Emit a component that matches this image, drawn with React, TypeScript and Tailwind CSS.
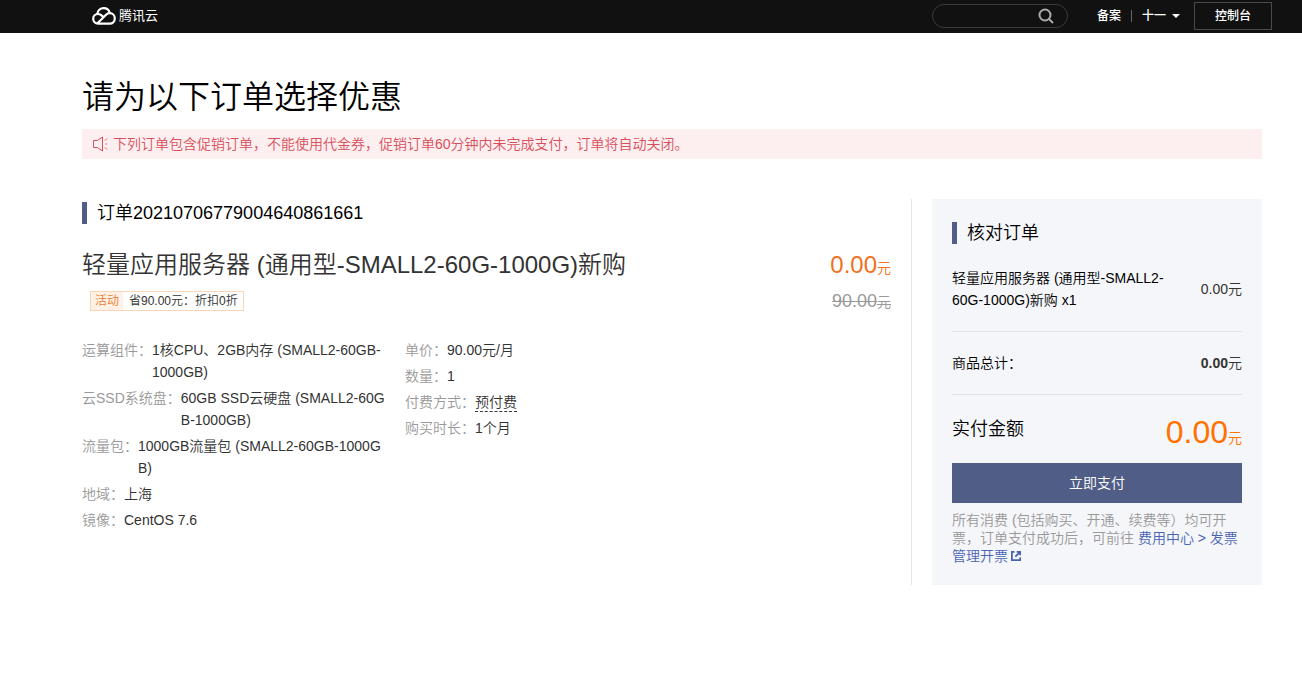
import React from 'react';

type Field = { label: string; value: string; hint?: boolean };

const specs: Field[] = [
  { label: '运算组件：', value: '1核CPU、2GB内存 (SMALL2-60GB-1000GB)' },
  { label: '云SSD系统盘：', value: '60GB SSD云硬盘 (SMALL2-60GB-1000GB)' },
  { label: '流量包：', value: '1000GB流量包 (SMALL2-60GB-1000GB)' },
  { label: '地域：', value: '上海' },
  { label: '镜像：', value: 'CentOS 7.6' },
];

const billing: Field[] = [
  { label: '单价：', value: '90.00元/月' },
  { label: '数量：', value: '1' },
  { label: '付费方式：', value: '预付费', hint: true },
  { label: '购买时长：', value: '1个月' },
];

function CloudLogo() {
  return (
    <svg className="h-[18px] w-6" viewBox="0 0 24 18" fill="none" stroke="#fff" strokeWidth="2.2" strokeLinecap="round" strokeLinejoin="round" aria-hidden="true">
      <path d="M5.3 7C5.700 3.600 8.300 1.200 11.600 1.200c3 0 5.500 1.900 6.200 4.800" />
      <path d="M10.400 9.100C9.100 7.800 7.700 7 6 7c-2.700 0-4.800 2.100-4.800 4.800 0 2.800 2.100 4.900 4.900 4.900h11.600c2.900 0 5.100-2.300 5.100-5.200s-2.200-5.300-5.100-5.300c-1.500 0-2.700.6-3.900 1.800l-8.300 8.300" />
    </svg>
  );
}

function SpeakerIcon() {
  return (
    <svg className="h-4 w-4 shrink-0" viewBox="0 0 16 16" fill="none" stroke="#d9505c" aria-hidden="true">
      <path d="M.5 4.500h4l5-3.500v14l-5-3.500h-4z" />
      <path d="M12 4.500l2-2M12.500 8h1.500M12 11.500l2 2" />
    </svg>
  );
}

function ExternalIcon() {
  return (
    <svg className="ml-[3px] inline-block h-[10px] w-[10px] align-baseline" viewBox="0 0 10 10" fill="none" stroke="#4a64b4" strokeWidth="1.8" aria-hidden="true">
      <path d="M3.500.9H.9v8.200h8.200V6.500M5.700.9h3.400v3.400M8.900 1.100 4.300 5.700" />
    </svg>
  );
}

function SectionTitle({ children }: { children: React.ReactNode }) {
  return (
    <h2 className="flex h-[22px] items-center border-l-[5px] border-[#505d87] pl-[10px] text-lg leading-[22px] text-black">
      {children}
    </h2>
  );
}

function FieldList({ fields }: { fields: Field[] }) {
  return (
    <dl className="flex flex-col gap-1">
      {fields.map((f) => (
        <div key={f.label} className="flex">
          <dt className="shrink-0 text-[#999]">{f.label}</dt>
          <dd className="break-all text-[#333]">
            {f.hint ? <span className="border-b border-dashed border-[#333] pb-px">{f.value}</span> : f.value}
          </dd>
        </div>
      ))}
    </dl>
  );
}

export default function App() {
  return (
    <div className="min-h-screen bg-white font-['Liberation_Sans','Noto_Sans_CJK_SC',sans-serif] text-sm leading-[22px] font-[350] text-[#333]">
      <header className="flex h-[33px] items-center bg-[#111] pr-[30px] pb-px pl-[92px] text-xs text-white">
        <a href="#home" className="flex items-center gap-[3px] text-[13px] font-normal">
          <CloudLogo />
          腾讯云
        </a>
        <form className="ml-auto flex h-6 w-[136px] items-center rounded-full border border-[#3a3a3a] pr-[13px] pl-3">
          <input type="search" aria-label="搜索" className="min-w-0 flex-1 bg-transparent outline-none" />
          <button type="button" aria-label="搜索">
            <svg className="h-4 w-4" viewBox="0 0 16 16" fill="none" stroke="#aaa" strokeWidth="2" aria-hidden="true">
              <circle cx="7" cy="7" r="5.500" />
              <path d="m11 11 4 4" />
            </svg>
          </button>
        </form>
        <a href="#record" className="ml-[29px] font-medium">备案</a>
        <span className="mx-[10px] h-3 w-px bg-[#666]" />
        <button type="button" className="flex items-center gap-[6px] font-medium">
          十一
          <svg className="h-1 w-2" viewBox="0 0 8 4" fill="#fff" aria-hidden="true">
            <path d="M0 0h8L4 4z" />
          </svg>
        </button>
        <a href="#console" className="ml-[14px] flex h-7 w-[78px] items-center justify-center border border-[#4a4a4a] font-medium">
          控制台
        </a>
      </header>

      <main className="pt-10 pr-10 pb-10 pl-[82px]">
        <h1 className="text-[32px] leading-[48px] font-[350] text-black">请为以下订单选择优惠</h1>
        <p className="mt-2 flex h-[30px] items-center gap-1 bg-[#fdeff0] px-[11px] text-[#d9505c]">
          <SpeakerIcon />
          下列订单包含促销订单，不能使用代金券，促销订单60分钟内未完成支付，订单将自动关闭。
        </p>

        <div className="mt-10 flex">
          <section className="min-w-0 flex-1 border-r border-[#e3e5ea] pt-[3px] pr-5">
            <SectionTitle>订单20210706779004640861661</SectionTitle>
            <div className="mt-6 flex justify-between">
              <div>
                <h3 className="text-2xl leading-[34px] text-[#333]">轻量应用服务器 (通用型-SMALL2-60G-1000G)新购</h3>
                <p className="mt-[9px] ml-2 inline-flex h-5 items-center border border-[#f9d5b8] pr-[5px] text-xs leading-[18px]">
                  <span className="bg-[#fff1e5] px-1 text-[#ed7b2f]">活动</span>
                  <span className="pl-[6px]">省90.00元：折扣0折</span>
                </p>
              </div>
              <div className="text-right">
                <p className="text-2xl leading-[34px] text-[#f37021]">
                  0.00<span className="text-sm">元</span>
                </p>
                <p className="mt-2 text-lg leading-[22px] text-[#999] line-through">
                  90.00<span className="text-sm">元</span>
                </p>
              </div>
            </div>
            <div className="mt-[27px] grid grid-cols-[303px_1fr] gap-5">
              <FieldList fields={specs} />
              <FieldList fields={billing} />
            </div>
          </section>

          <aside className="ml-5 w-[330px] shrink-0 bg-[#f5f6fa] px-5 pt-[23px] pb-5">
            <SectionTitle>核对订单</SectionTitle>
            <div className="mt-[23px] flex items-center justify-between border-b border-[#dfe2e8] pb-5">
              <p className="w-[216px] text-black">轻量应用服务器 (通用型-SMALL2-60G-1000G)新购 x1</p>
              <span>0.00元</span>
            </div>
            <div className="flex items-center justify-between border-b border-[#dfe2e8] py-5">
              <span className="text-black">商品总计：</span>
              <span><b>0.00</b>元</span>
            </div>
            <div className="mt-[13px] flex h-[55px] justify-between">
              <span className="pt-[10px] text-lg leading-[22px] text-black">实付金额</span>
              <span className="text-[32px] leading-[48px] text-[#ff7200]">
                0.00<span className="text-sm">元</span>
              </span>
            </div>
            <button type="button" className="h-10 w-full bg-[#505d87] text-white">立即支付</button>
            <p className="mt-2 leading-[18px] text-[#999]">
              所有消费 (包括购买、开通、续费等）均可开票，订单支付成功后，可前往{' '}
              <a href="#invoice" className="text-[#4a64b4]">
                费用中心 &gt; 发票管理开票
                <ExternalIcon />
              </a>
            </p>
          </aside>
        </div>
      </main>
    </div>
  );
}
